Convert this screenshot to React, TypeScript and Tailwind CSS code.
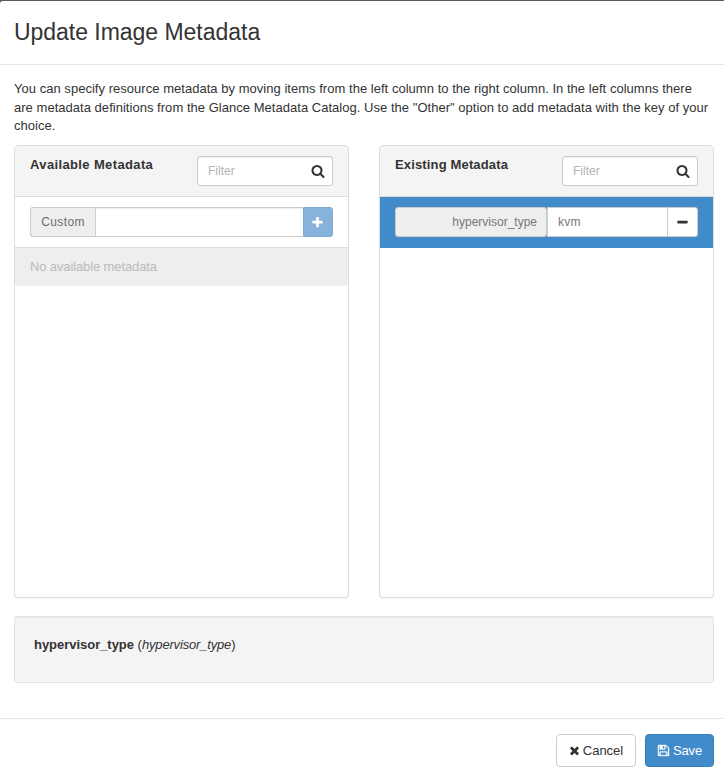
import type { ReactNode } from "react";

const icons = {
  search:
    "M1216 832q0-185-131.5-316.5t-316.5-131.5-316.5 131.5-131.5 316.5 131.5 316.5 316.5 131.5 316.5-131.5 131.5-316.5zm512 832q0 52-38 90t-90 38q-54 0-90-38l-343-342q-179 124-399 124-143 0-273.5-55.5t-225-150-150-225-55.5-273.5 55.5-273.5 150-225 225-150 273.5-55.5 273.5 55.5 225 150 150 225 55.5 273.5q0 220-124 399l343 343q37 37 37 90z",
  plus: "M1600 736v192q0 40-28 68t-68 28h-416v416q0 40-28 68t-68 28h-192q-40 0-68-28t-28-68v-416h-416q-40 0-68-28t-28-68v-192q0-40 28-68t68-28h416v-416q0-40 28-68t68-28h192q40 0 68 28t28 68v416h416q40 0 68 28t28 68z",
  minus:
    "M1600 736v192q0 40-28 68t-68 28h-1216q-40 0-68-28t-28-68v-192q0-40 28-68t68-28h1216q40 0 68 28t28 68z",
  times:
    "M1490 1322q0 40-28 68l-136 136q-28 28-68 28t-68-28l-294-294-294 294q-28 28-68 28t-68-28l-136-136q-28-28-28-68t28-68l294-294-294-294q-28-28-28-68t28-68l136-136q28-28 68-28t68 28l294 294 294-294q28-28 68-28t68 28l136 136q28 28 28 68t-28 68l-294 294 294 294q28 28 28 68z",
  floppy:
    "M512 1536h768v-384h-768v384zm896 0h128v-896q0-14-10-38.5t-20-34.5l-281-281q-10-10-34-20t-39-10v416q0 40-28 68t-68 28h-576q-40 0-68-28t-28-68v-416h-128v1280h128v-416q0-40 28-68t68-28h832q40 0 68 28t28 68v416zm-384-928v-320q0-13-9.5-22.5t-22.5-9.5h-192q-13 0-22.5 9.5t-9.5 22.5v320q0 13 9.5 22.5t22.5 9.5h192q13 0 22.5-9.5t9.5-22.5zm640 32v928q0 40-28 68t-68 28h-1344q-40 0-68-28t-28-68v-1344q0-40 28-68t68-28h928q40 0 88 20t76 48l280 280q28 28 48 76t20 88z",
};

function Icon({ name, className }: { name: keyof typeof icons; className: string }) {
  return (
    <svg viewBox="0 0 1792 1792" fill="currentColor" className={`shrink-0 ${className}`} aria-hidden="true">
      <path d={icons[name]} />
    </svg>
  );
}

function Panel({ title, children }: { title: ReactNode; children: ReactNode }) {
  return (
    <section className="h-[453px] w-[335px] overflow-hidden rounded border border-[#dddddd] bg-white shadow-[0_1px_1px_rgba(0,0,0,0.05)]">
      <header className="flex h-[51px] justify-between border-b border-[#dddddd] bg-[#f4f4f4] px-[15px] pt-[10px]">
        <h2 className="text-[13px] leading-[18px] font-bold">{title}</h2>
        <div className="flex h-[30px] w-[136px] items-center rounded-[3px] border border-[#cccccc] bg-white pr-[7px] pl-[10px] shadow-[inset_0_1px_1px_rgba(0,0,0,0.075)]">
          <input
            placeholder="Filter"
            className="w-full min-w-0 text-[12px] outline-none placeholder:text-[#b3b3b3]"
          />
          <Icon name="search" className="size-[14px]" />
        </div>
      </header>
      {children}
    </section>
  );
}

export default function App() {
  return (
    <main className="h-[780px] w-[724px] overflow-hidden bg-[#5b5b5b] pt-px font-['Liberation_Sans',Arial,sans-serif] text-[13px] text-[#333333]">
      <div className="h-full rounded-tl-[3px] bg-white">
        <header className="h-16 border-b border-[#e5e5e5] pt-[17px] pl-[14px]">
          <h1 className="text-[23px] leading-7 tracking-[-0.03px] whitespace-nowrap">Update Image Metadata</h1>
        </header>
        <div className="h-[653px] px-[14px] pt-[15px] pr-[10px]">
          <p className="h-[65px] text-[13px] leading-[18.57px] tracking-[0.03px] whitespace-nowrap">
            You can specify resource metadata by moving items from the left column to the right column. In the left columns there
            <br />
            are metadata definitions from the Glance Metadata Catalog. Use the "Other" option to add metadata with the key of your
            <br />
            choice.
          </p>
          <div className="flex justify-between">
            <Panel title={<span className="tracking-[0.37px]">Available Metadata</span>}>
              <div className="flex h-[51px] border-b border-[#dddddd] px-[15px] pt-[10px]">
                <span className="flex h-[30px] w-[65px] items-center justify-center rounded-l-[3px] border border-r-0 border-[#cccccc] bg-[#eeeeee] text-[12px] tracking-[0.4px] text-[#6d6d6d]">
                  Custom
                </span>
                <input className="h-[30px] w-[208px] border border-r-0 border-[#cccccc] shadow-[inset_0_1px_1px_rgba(0,0,0,0.075)] outline-none" />
                <button className="flex h-[30px] w-[30px] items-center justify-center rounded-r-[3px] border border-[#7eabd3] bg-[#86b2dc] pr-[2px] text-white">
                  <Icon name="plus" className="size-[13px]" />
                </button>
              </div>
              <div className="h-[38px] rounded-b-[3px] bg-[#eeeeee] px-[15px] pt-[10px] leading-[18px] tracking-[-0.12px] text-[#bbbbbb]">
                No available metadata
              </div>
            </Panel>
            <Panel title={<span className="tracking-[0.15px]">Existing Metadata</span>}>
              <div className="flex h-[51px] bg-[#428bca] px-[15px] pt-[10px]">
                <span className="flex h-[30px] w-[152px] items-center justify-end rounded-[3px] border border-[#cccccc] bg-[#eeeeee] pr-[9px] text-[12px] text-[#777777]">
                  hypervisor_type
                </span>
                <input
                  defaultValue="kvm"
                  className="h-[30px] w-[120px] border border-r-0 border-[#cccccc] bg-white pl-[10px] text-[12px] tracking-[0.2px] text-[#777777] outline-none"
                />
                <button className="flex h-[30px] w-[31px] items-center justify-center rounded-r-[3px] border border-[#cccccc] bg-white">
                  <Icon name="minus" className="size-[13px]" />
                </button>
              </div>
            </Panel>
          </div>
          <div className="mt-[18px] h-[67px] w-full rounded-[3px] border border-[#e3e3e3] bg-[#f4f4f4] pt-[19px] pl-[19px] leading-[18px] shadow-[inset_0_1px_1px_rgba(0,0,0,0.05)]">
            <strong className="tracking-[-0.03px]">hypervisor_type</strong> (
            <em className="tracking-[-0.17px]">hypervisor_type</em>)
          </div>
        </div>
        <footer className="flex justify-end gap-[9px] border-t border-[#e5e5e5] pt-[15px] pr-[10px]">
          <button className="flex h-[33px] w-[80px] items-center justify-center gap-[2px] rounded border border-[#cccccc] bg-white pr-px">
            <Icon name="times" className="size-[13px]" />
            <span>Cancel</span>
          </button>
          <button className="flex h-[33px] w-[69px] items-center justify-center gap-[3px] rounded border border-[#357ebd] bg-[#428bca] text-white">
            <Icon name="floppy" className="size-[13px] stroke-current stroke-[50]" />
            <span className="tracking-[-0.2px]">Save</span>
          </button>
        </footer>
      </div>
    </main>
  );
}
